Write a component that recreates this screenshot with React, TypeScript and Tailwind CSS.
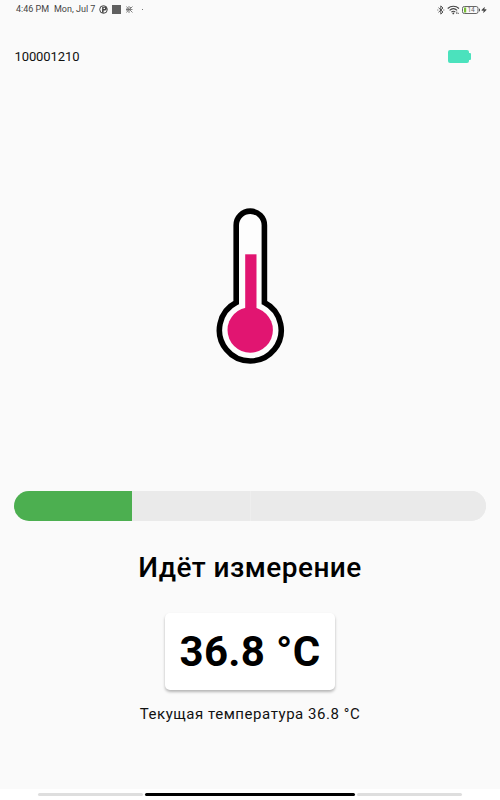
import { Zap } from 'lucide-react';

const DEVICE_ID = '100001210';
const TEMPERATURE = '36.8 °C';
const STEPS = [
  'bg-[#4caf50]',
  'bg-[#eaeaea]',
  'bg-[#eaeaea] border-l border-[#eeeeee]',
  'bg-[#eaeaea]',
];

function StatusBar() {
  return (
    <div className="flex h-[19px] items-center justify-between pl-4 pr-[13px] text-[#444]">
      <div className="flex items-center">
        <span className="w-[38px] whitespace-nowrap text-[9px]">4:46 PM</span>
        <span className="w-[45px] whitespace-nowrap text-[9px]">Mon, Jul 7</span>
        <svg width="9" height="9" viewBox="0 0 9 9">
          <circle cx="4.5" cy="4.5" r="3.8" fill="none" stroke="#444" strokeWidth="1" />
          <path d="M3.2 1.8H6.5L8.2 4 6.2 5.6H4.6V8.2L3 7.6Z" fill="#444" />
          <path d="M4.5 2.7H6V4H4.5Z" fill="#fafafa" />
        </svg>
        <div className="ml-1 h-[9px] w-[9px] bg-[#606060]" />
        <svg className="ml-[5px]" width="7" height="7" viewBox="0 0 7 7" fill="none" stroke="#666" strokeWidth="0.8">
          <path d="M0.5 0.5L3 3.5L0.5 6.5M3 0V7M0 3.5H6.5M6.5 0.5L3.5 3.5L6.5 6.5M4.5 1V2M1 2V5" />
        </svg>
        <div className="ml-[9px] h-px w-px bg-[#777]" />
      </div>
      <div className="flex items-center">
        {/* Bluetooth */}
        <svg width="8" height="10" viewBox="0 0 8 10" fill="none" stroke="#444" strokeWidth="0.9">
          <path d="M1.5 2.7L6 7L3.8 9.1V0.9L6 3L1.5 7.3M0.4 5H1.3M6.3 5H7.3" />
        </svg>
        {/* Wi-Fi */}
        <svg className="ml-[2px]" width="13" height="10" viewBox="0 0 13 10" fill="none" stroke="#444" strokeWidth="1.1">
          <path d="M0.7 3.5C4 0.5 8.7 0.5 12 3.5M2.6 5.4C4.8 3.3 7.9 3.3 10.1 5.4M4.4 7.2C5.6 6 7.1 6 8.3 7.2" />
          <circle cx="6.3" cy="8.4" r="0.9" fill="#444" stroke="none" />
          <path d="M9.8 6.6V9M11.3 7.8V9" strokeWidth="0.8" />
        </svg>
        <svg className="ml-[2px]" width="18" height="8" viewBox="0 0 18 8">
          <rect x="0.5" y="0.5" width="15.5" height="7" rx="1.8" fill="#fafafa" stroke="#666" />
          <rect x="2" y="1.5" width="2.2" height="5" fill="#76bd35" />
          <rect x="17" y="2.7" width="1" height="2.6" fill="#555" />
          <text x="5.4" y="6.4" fontSize="6.5" fill="#666" fontFamily="Roboto, sans-serif">14</text>
        </svg>
        <Zap className="ml-px" size={6} fill="currentColor" />
      </div>
    </div>
  );
}

function Thermometer() {
  return (
    <svg width="80" height="170" viewBox="0 0 80 170">
      <path
        d="M26.5 102.6V25.2A14.1 14.1 0 0 1 54.7 25.2V102.6A30.9 30.9 0 1 1 26.5 102.6Z"
        transform="translate(-0.3 0)"
        fill="#fdfdfd"
        stroke="#000"
        strokeWidth="5.6"
      />
      <path d="M35.2 54.3H46.5V115H35.2Z" fill="#e11571" />
      <circle cx="40.2" cy="130" r="22.7" fill="#e11571" />
    </svg>
  );
}

export default function App() {
  return (
    <div className="flex h-[800px] w-[500px] flex-col bg-white font-['Roboto',sans-serif] text-black">
      <div className="flex h-[789px] flex-col bg-[#fafafa]">
        <StatusBar />

        {/* Device header */}
        <div className="mt-7 flex h-5 items-center justify-between pl-[14.5px] pr-[29px]">
          <span className="text-[13px] tracking-[-0.1px] text-[#111]">{DEVICE_ID}</span>
          <div className="mb-[2px] flex items-center">
            <div className="h-[13px] w-[21px] rounded-[2px] bg-[#4be2bd]" />
            <div className="h-[7px] w-[2px] rounded-r-[1px] bg-[#4be2bd]" />
          </div>
        </div>

        <div className="mt-[133px] flex justify-center">
          <Thermometer />
        </div>

        {/* Measurement progress */}
        <div className="mx-[14px] mt-[121px] flex h-[30px] overflow-hidden rounded-full bg-[#eaeaea]">
          {STEPS.map((step, i) => (
            <div key={i} className={`flex-1 ${step}`} />
          ))}
        </div>

        <div className="flex flex-col items-center">
          <h1 className="mt-[27px] whitespace-nowrap text-[28px] font-medium leading-10 tracking-[0.45px]">Идёт измерение</h1>
          <div className="mt-[25px] flex h-[77px] w-[170px] items-center justify-center rounded-[5px] bg-white shadow-[0_2px_3px_rgba(0,0,0,0.28)]">
            <span className="whitespace-nowrap text-[42px] font-bold leading-none tracking-[0.3px]">{TEMPERATURE}</span>
          </div>
          <p className="mt-[14px] whitespace-nowrap text-[15px] leading-5 tracking-[0.55px] text-[#111]">
            Текущая температура {TEMPERATURE}
          </p>
        </div>
      </div>

      {/* Gesture navigation bar */}
      <div className="mt-[3px] flex h-1 items-center justify-center gap-[2px]">
        <div className="h-[3px] w-[105px] rounded-full bg-[#dedede]" />
        <div className="h-[3px] w-[210px] rounded-full bg-black" />
        <div className="h-[3px] w-[105px] rounded-full bg-[#dedede]" />
      </div>
    </div>
  );
}
